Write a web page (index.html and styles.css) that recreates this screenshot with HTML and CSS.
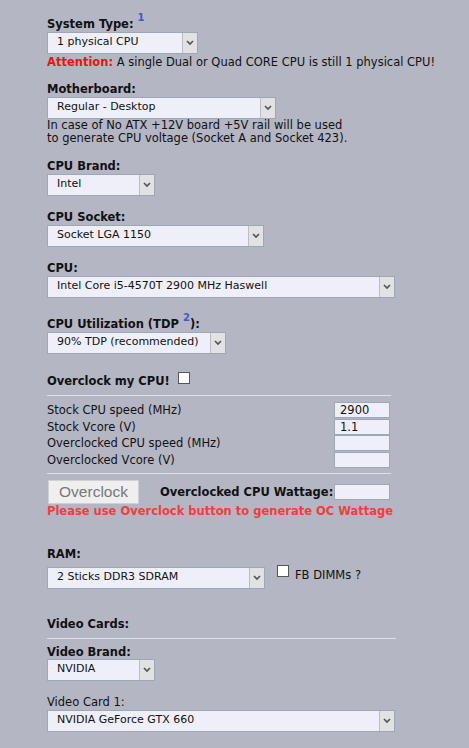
FILE: index.html
```html
<!DOCTYPE html>
<html>
<head>
  <link rel="stylesheet" href="styles.css">
</head>
<body>

<div class="calc">

  <!-- System -->
  <div class="field first">
    <div class="lbl">System Type: <sup class="ref">1</sup></div>
    <div class="dd w151"><span class="val">1 physical CPU</span><span class="arrow"><svg width="8" height="6" viewBox="0 0 8 6"><polyline points="1,1 4,4 7,1" fill="none" stroke="#555" stroke-width="1.7"/></svg></span></div>
    <div class="note"><b class="attn">Attention:</b> A single Dual or Quad CORE CPU is still 1 physical CPU!</div>
  </div>

  <div class="field mobo">
    <div class="lbl">Motherboard:</div>
    <div class="dd w229"><span class="val">Regular - Desktop</span><span class="arrow"><svg width="8" height="6" viewBox="0 0 8 6"><polyline points="1,1 4,4 7,1" fill="none" stroke="#555" stroke-width="1.7"/></svg></span></div>
    <div class="note tight">In case of No ATX +12V board +5V rail will be used<br>to generate CPU voltage (Socket A and Socket 423).</div>
  </div>

  <!-- CPU -->
  <div class="field">
    <div class="lbl">CPU Brand:</div>
    <div class="dd w108"><span class="val">Intel</span><span class="arrow"><svg width="8" height="6" viewBox="0 0 8 6"><polyline points="1,1 4,4 7,1" fill="none" stroke="#555" stroke-width="1.7"/></svg></span></div>
  </div>

  <div class="field">
    <div class="lbl">CPU Socket:</div>
    <div class="dd w217"><span class="val">Socket LGA 1150</span><span class="arrow"><svg width="8" height="6" viewBox="0 0 8 6"><polyline points="1,1 4,4 7,1" fill="none" stroke="#555" stroke-width="1.7"/></svg></span></div>
  </div>

  <div class="field">
    <div class="lbl">CPU:</div>
    <div class="dd w348"><span class="val">Intel Core i5-4570T 2900 MHz Haswell</span><span class="arrow"><svg width="8" height="6" viewBox="0 0 8 6"><polyline points="1,1 4,4 7,1" fill="none" stroke="#555" stroke-width="1.7"/></svg></span></div>
  </div>

  <div class="field util">
    <div class="lbl">CPU Utilization (TDP <sup class="ref">2</sup>):</div>
    <div class="dd w179"><span class="val">90% TDP (recommended)</span><span class="arrow"><svg width="8" height="6" viewBox="0 0 8 6"><polyline points="1,1 4,4 7,1" fill="none" stroke="#555" stroke-width="1.7"/></svg></span></div>
  </div>

  <!-- Overclock -->
  <div class="oc-head">
    <span class="lbl">Overclock my CPU!</span>
    <span class="check"></span>
  </div>
  <div class="rule w344"></div>

  <div class="oc-rows">
    <div class="oc-row"><span>Stock CPU speed (MHz)</span><span class="box">2900</span></div>
    <div class="oc-row"><span>Stock Vcore (V)</span><span class="box">1.1</span></div>
    <div class="oc-row"><span>Overclocked CPU speed (MHz)</span><span class="box"></span></div>
    <div class="oc-row"><span>Overclocked Vcore (V)</span><span class="box"></span></div>
  </div>
  <div class="rule w344 r2"></div>

  <div class="oc-action">
    <button class="btn" disabled>Overclock</button>
    <span class="lbl watt">Overclocked CPU Wattage:</span>
    <span class="box"></span>
  </div>
  <div class="warn">Please use Overclock button to generate OC Wattage</div>

  <!-- RAM -->
  <div class="field ram">
    <div class="lbl">RAM:</div>
    <div class="ram-row">
      <div class="dd w218"><span class="val">2 Sticks DDR3 SDRAM</span><span class="arrow"><svg width="8" height="6" viewBox="0 0 8 6"><polyline points="1,1 4,4 7,1" fill="none" stroke="#555" stroke-width="1.7"/></svg></span></div>
      <span class="check"></span>
      <span class="fb">FB DIMMs ?</span>
    </div>
  </div>

  <!-- Video -->
  <div class="lbl vc">Video Cards:</div>
  <div class="rule w349"></div>

  <div class="field vbrand">
    <div class="lbl">Video Brand:</div>
    <div class="dd w108"><span class="val">NVIDIA</span><span class="arrow"><svg width="8" height="6" viewBox="0 0 8 6"><polyline points="1,1 4,4 7,1" fill="none" stroke="#555" stroke-width="1.7"/></svg></span></div>
  </div>

  <div class="field">
    <div class="lbl plain">Video Card 1:</div>
    <div class="dd w348"><span class="val">NVIDIA GeForce GTX 660</span><span class="arrow"><svg width="8" height="6" viewBox="0 0 8 6"><polyline points="1,1 4,4 7,1" fill="none" stroke="#555" stroke-width="1.7"/></svg></span></div>
  </div>

</div>

</body>
</html>
```

FILE: styles.css
```css
body {
  margin: 0;
  background-color: #b4b6c4;
  font-family: "DejaVu Sans", Verdana, sans-serif;
  font-size: 11.5px;
  line-height: 14px;
  color: #111;
}
.calc {
  padding: 17px 0 0 47px;
}
.field {
  margin-bottom: 14px;
}
.field.first {
  margin-bottom: 13px;
}
.lbl {
  font-weight: bold;
  margin-bottom: 1px;
}
.lbl.plain {
  font-weight: normal;
}
.ref {
  color: #3a5bd0;
  font-size: 10px;
  line-height: 0;
  vertical-align: 7px;
}
.dd {
  display: flex;
  height: 22px;
  box-sizing: border-box;
  border: 1px solid #9ea7b6;
  background-color: #efeffa;
}
.dd .val {
  flex: 1;
  padding: 2px 0 0 9px;
  font-size: 11px;
  line-height: 13px;
  white-space: nowrap;
  overflow: hidden;
}
.dd .arrow {
  width: 14px;
  display: flex;
  align-items: center;
  justify-content: center;
  background-color: #e2e2e4;
  border-left: 1px solid #bcbcc2;
}
.w108 { width: 108px; }
.w151 { width: 151px; }
.w179 { width: 179px; }
.w217 { width: 217px; }
.w218 { width: 218px; }
.w229 { width: 229px; }
.w348 { width: 348px; }
.note {
  margin-top: 1px;
}
.note.tight {
  margin-top: 0;
  line-height: 13px;
}
.attn {
  color: #ee1111;
}
.field.util {
  margin-top: 19px;
  margin-bottom: 20px;
}
.check {
  display: inline-block;
  width: 12px;
  height: 12px;
  box-sizing: border-box;
  border: 1px solid #555;
  background-color: #fff;
}
.oc-head {
  display: flex;
  align-items: center;
  gap: 8px;
  height: 14px;
}
.oc-head .check {
  position: relative;
  top: -3px;
}
.rule {
  height: 1px;
  background-color: #dfe0e8;
  margin: 7px 0 6px;
}
.w344 { width: 344px; }
.w349 { width: 349px; }
.rule.r2 {
  margin: 5px 0 6px;
}
.oc-rows {
  width: 343px;
}
.oc-row {
  display: flex;
  justify-content: space-between;
  align-items: center;
  height: 16.5px;
}
.box {
  display: inline-block;
  width: 56px;
  height: 16px;
  box-sizing: border-box;
  border: 1px solid #9ea7b6;
  background-color: #efeffa;
  padding-left: 5px;
  line-height: 14px;
}
.oc-action {
  display: flex;
  align-items: center;
  width: 343px;
}
.btn {
  width: 91px;
  height: 24px;
  margin-left: 1px;
  border: 1px solid #cfcfd4;
  background-color: #efeff0;
  color: #777;
  font-family: "Liberation Sans", Arial, sans-serif;
  font-size: 15.5px;
  padding: 0;
}
.watt {
  margin-left: 21px;
  flex: 1;
}
.warn {
  color: #f43c3c;
  font-weight: bold;
  margin-top: 0;
  margin-bottom: 29px;
}
.ram .lbl {
  margin-bottom: 6px;
}
.ram-row {
  display: flex;
  align-items: flex-start;
}
.ram-row .check {
  margin: -2px 0 0 12px;
}
.fb {
  margin-left: 6px;
  line-height: 14px;
  margin-top: 1px;
}
.field.ram {
  margin-bottom: 28px;
}
.vc {
  margin-bottom: 0;
}
.vbrand .lbl {
  margin-bottom: 0;
}
```
